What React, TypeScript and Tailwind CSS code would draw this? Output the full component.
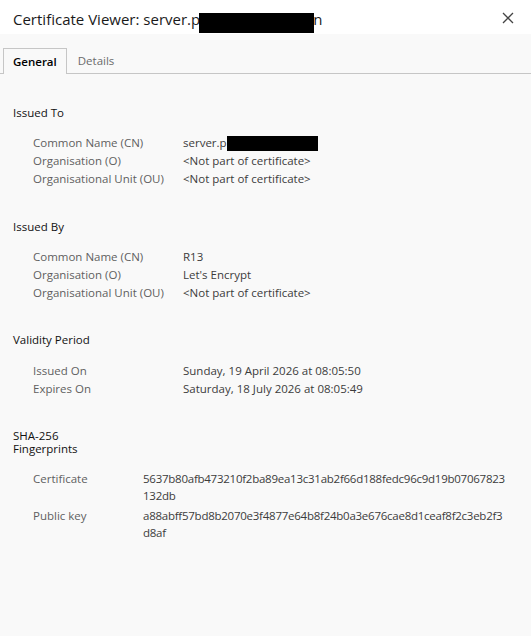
import React from "react";

const font = { fontFamily: '"Segoe UI", "Open Sans", "Noto Sans", sans-serif' };

function Row({ label, value }: { label: string; value: React.ReactNode }) {
  return (
    <div className="flex h-[18px] items-center">
      <div className="w-[150px] shrink-0 text-[#5f5f5f]">{label}</div>
      <div className="text-[#3c3c3c]">{value}</div>
    </div>
  );
}

function Redact({ w }: { w: number }) {
  return <span className="inline-block h-[15px] bg-black align-middle" style={{ width: w }} />;
}

function Hash({ label, lines }: { label: string; lines: string[] }) {
  return (
    <div className="flex leading-[17px]">
      <div className="w-[110px] shrink-0 text-[#5f5f5f]">{label}</div>
      <div className="flex flex-col tracking-[-0.25px] text-[#3c3c3c]">
        {lines.map((l) => (
          <span key={l} className="whitespace-nowrap">
            {l}
          </span>
        ))}
      </div>
    </div>
  );
}

export default function App() {
  return (
    <div className="flex h-[636px] w-[531px] flex-col bg-[#f9f9f9] text-[11.5px]" style={font}>
      <div className="flex h-[34px] shrink-0 items-center justify-between bg-white pl-[13px] pr-[17px] pt-[5px]">
        <div className="flex items-center text-[15px] text-[#1a1a1a]">
          <span>Certificate Viewer: server.p</span>
          <span className="ml-[-1px] mt-[6px] inline-block h-[20px] w-[115px] bg-black" />
          <span className="ml-[-1px] text-[#1a1a1a]">n</span>
        </div>
        <svg width="12" height="12" viewBox="0 0 12 12" className="mt-[-4px]">
          <path d="M1 1 L11 11 M11 1 L1 11" stroke="#444" strokeWidth="1.3" />
        </svg>
      </div>
      <div className="mt-[14px] flex h-[26px] shrink-0 items-end border-b border-[#c6c6c6] pl-[3px]">
        <div className="-mb-px flex h-[26px] items-center border border-b-0 border-[#c6c6c6] bg-[#f9f9f9] px-[9px] text-[11.5px] font-semibold text-black">
          General
        </div>
        <div className="flex h-[26px] items-center px-[11px] pt-[1px] text-[11.5px] text-[#6b6b6b]">Details</div>
      </div>
      <div className="flex flex-col px-[13px] pt-[30px]">
        <div className="h-[18px] leading-[18px] text-[#111]">Issued To</div>
        <div className="mt-[12px] flex flex-col pl-[20px]">
          <Row label="Common Name (CN)" value={<span className="flex items-center">server.p<Redact w={91} /></span>} />
          <Row label="Organisation (O)" value="<Not part of certificate>" />
          <Row label="Organisational Unit (OU)" value="<Not part of certificate>" />
        </div>
        <div className="mt-[30px] h-[18px] leading-[18px] text-[#111]">Issued By</div>
        <div className="mt-[12px] flex flex-col pl-[20px]">
          <Row label="Common Name (CN)" value="R13" />
          <Row label="Organisation (O)" value="Let's Encrypt" />
          <Row label="Organisational Unit (OU)" value="<Not part of certificate>" />
        </div>
        <div className="mt-[29px] h-[18px] leading-[18px] text-[#111]">Validity Period</div>
        <div className="mt-[13px] flex flex-col pl-[20px]">
          <Row label="Issued On" value="Sunday, 19 April 2026 at 08:05:50" />
          <Row label="Expires On" value="Saturday, 18 July 2026 at 08:05:49" />
        </div>
        <div className="mt-[31px] flex flex-col text-[#111]">
          <span className="leading-[13px]">SHA-256</span>
          <span className="leading-[14px]">Fingerprints</span>
        </div>
        <div className="mt-[14px] flex flex-col gap-[3px] pl-[20px]">
          <Hash label="Certificate" lines={["5637b80afb473210f2ba89ea13c31ab2f66d188fedc96c9d19b07067823", "132db"]} />
          <Hash label="Public key" lines={["a88abff57bd8b2070e3f4877e64b8f24b0a3e676cae8d1ceaf8f2c3eb2f3", "d8af"]} />
        </div>
      </div>
    </div>
  );
}
